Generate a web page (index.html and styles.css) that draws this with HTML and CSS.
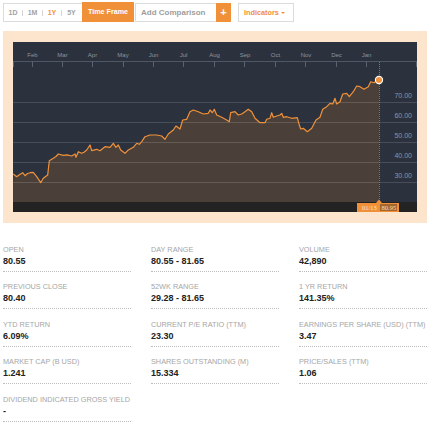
FILE: index.html
```html
<!DOCTYPE html>
<html>
<head>
<meta charset="utf-8">
<link rel="stylesheet" href="styles.css">
</head>
<body>
<div class="toolbar">
  <div class="tabs">
    <span class="tab w18">1D</span><span class="sep"></span>
    <span class="tab w19">1M</span><span class="sep"></span>
    <span class="tab w18 active">1Y</span><span class="sep"></span>
    <span class="tab w19">5Y</span>
  </div>
  <div class="timeframe">Time Frame</div>
  <div class="compare">Add Comparison</div>
  <div class="plus">+</div>
  <div class="indicators">Indicators<span class="caret"></span></div>
</div>

<div class="chart-panel">
  <svg class="chart" width="404" height="170" viewBox="0 0 404 170" xmlns="http://www.w3.org/2000/svg">
    <rect x="0" y="0" width="404" height="170" fill="#2b323e"/>
    <polygon fill="#4a4039" points="0,160 0.3,132 3.7,134.7 6,133 9.7,130.7 12,133.7 14.5,131.5 17,130.7 20.3,130.3 23.7,134.7 27.7,140.7 30.3,136.3 34.7,133 36.3,118.7 40.3,116.3 43,114.5 45.3,112 50.3,113.3 54,112.8 58.7,114 62,112 63,115.3 65.3,109.7 68.7,111.3 71,110.2 73.7,108 77,103 78.7,108.7 83.7,107.3 87,108.7 92,104.7 97,105.3 100.3,101.3 103,105.3 105.3,103 107.7,108 112,111.3 115.3,108 120.3,105.3 123.7,101.3 126.3,102.3 128.7,99.7 132,94.7 137,93 143.7,93 148.7,94 152,97.3 155.3,92 160.3,88 163,84 167,87 169.7,78 173.7,77.3 177,69.7 180.3,68 185.3,69.7 190.3,72 195.3,71.3 197,68 199.3,70.7 201.3,67.3 203.7,73 208.7,75.3 213.7,78 216.3,79.7 217.7,70.7 222,69.7 225.3,73 228.7,72 232,69.7 235.3,67.3 238.7,69.7 242,76.3 247,80.7 252,80.7 253.7,77.3 257,76.3 258.7,70.7 260.3,75.3 263.7,74 267,73 268.7,71.3 270.3,75.3 273.7,74.7 278.7,76.3 284.3,75.7 286.3,83 287.7,87 290.3,86.3 294.3,89.7 298.7,86.3 303,78 307,75.3 309.7,67.3 313.7,64.7 317,61.3 319.7,62 322,56.3 323.7,62 327,59.7 329.7,52 333.7,51.3 336.3,54.7 340.3,49.7 343.7,44 347,44.7 351,47.3 355.3,44.7 357.7,39.7 361,40.7 363.7,38.7 366,38 366,160"/>
    <g stroke="rgba(255,255,255,0.14)" stroke-width="1">
      <line x1="0" y1="60.5" x2="404" y2="60.5"/>
      <line x1="0" y1="80.5" x2="404" y2="80.5"/>
      <line x1="0" y1="100.5" x2="404" y2="100.5"/>
      <line x1="0" y1="120.5" x2="404" y2="120.5"/>
      <line x1="0" y1="140.5" x2="404" y2="140.5"/>
    </g>
    <line x1="0" y1="19.5" x2="404" y2="19.5" stroke="#4f5765" stroke-width="1"/>
    <g stroke="#5a6270" stroke-width="1">
      <line x1="0.5" y1="19" x2="0.5" y2="25"/>
      <line x1="19.5" y1="19" x2="19.5" y2="25"/>
      <line x1="49.5" y1="19" x2="49.5" y2="25"/>
      <line x1="79.5" y1="19" x2="79.5" y2="25"/>
      <line x1="110.5" y1="19" x2="110.5" y2="25"/>
      <line x1="140.5" y1="19" x2="140.5" y2="25"/>
      <line x1="170.5" y1="19" x2="170.5" y2="25"/>
      <line x1="201.5" y1="19" x2="201.5" y2="25"/>
      <line x1="231.5" y1="19" x2="231.5" y2="25"/>
      <line x1="262.5" y1="19" x2="262.5" y2="25"/>
      <line x1="292.5" y1="19" x2="292.5" y2="25"/>
      <line x1="323.5" y1="19" x2="323.5" y2="25"/>
      <line x1="353.5" y1="19" x2="353.5" y2="25"/>
      <line x1="403.5" y1="19" x2="403.5" y2="25"/>
    </g>
    <g class="month" text-anchor="middle">
      <text x="19.5" y="14.5">Feb</text>
      <text x="49.5" y="14.5">Mar</text>
      <text x="79.5" y="14.5">Apr</text>
      <text x="110" y="14.5">May</text>
      <text x="140.5" y="14.5">Jun</text>
      <text x="170.5" y="14.5">Jul</text>
      <text x="201.5" y="14.5">Aug</text>
      <text x="232" y="14.5">Sep</text>
      <text x="262.5" y="14.5">Oct</text>
      <text x="293" y="14.5">Nov</text>
      <text x="323.5" y="14.5">Dec</text>
      <text x="353.5" y="14.5">Jan</text>
    </g>
    <polyline fill="none" stroke="#f0913a" stroke-width="1.2" stroke-linejoin="round" points="0.3,132 3.7,134.7 6,133 9.7,130.7 12,133.7 14.5,131.5 17,130.7 20.3,130.3 23.7,134.7 27.7,140.7 30.3,136.3 34.7,133 36.3,118.7 40.3,116.3 43,114.5 45.3,112 50.3,113.3 54,112.8 58.7,114 62,112 63,115.3 65.3,109.7 68.7,111.3 71,110.2 73.7,108 77,103 78.7,108.7 83.7,107.3 87,108.7 92,104.7 97,105.3 100.3,101.3 103,105.3 105.3,103 107.7,108 112,111.3 115.3,108 120.3,105.3 123.7,101.3 126.3,102.3 128.7,99.7 132,94.7 137,93 143.7,93 148.7,94 152,97.3 155.3,92 160.3,88 163,84 167,87 169.7,78 173.7,77.3 177,69.7 180.3,68 185.3,69.7 190.3,72 195.3,71.3 197,68 199.3,70.7 201.3,67.3 203.7,73 208.7,75.3 213.7,78 216.3,79.7 217.7,70.7 222,69.7 225.3,73 228.7,72 232,69.7 235.3,67.3 238.7,69.7 242,76.3 247,80.7 252,80.7 253.7,77.3 257,76.3 258.7,70.7 260.3,75.3 263.7,74 267,73 268.7,71.3 270.3,75.3 273.7,74.7 278.7,76.3 284.3,75.7 286.3,83 287.7,87 290.3,86.3 294.3,89.7 298.7,86.3 303,78 307,75.3 309.7,67.3 313.7,64.7 317,61.3 319.7,62 322,56.3 323.7,62 327,59.7 329.7,52 333.7,51.3 336.3,54.7 340.3,49.7 343.7,44 347,44.7 351,47.3 355.3,44.7 357.7,39.7 361,40.7 363.7,38.7 366,38"/>
    <line x1="366.5" y1="20" x2="366.5" y2="160" stroke="#a0703e" stroke-width="1" stroke-dasharray="1 1"/>
    <g class="yaxis" text-anchor="end">
      <text x="399" y="56">70.00</text>
      <text x="399" y="76">60.00</text>
      <text x="399" y="96">50.00</text>
      <text x="399" y="116">40.00</text>
      <text x="399" y="136">30.00</text>
    </g>
    <rect x="0" y="160" width="404" height="10" fill="#232323"/>
    <polygon points="363,161 366,157.5 369,161" fill="#f0913a"/>
    <rect x="344" y="161" width="42" height="9" fill="#f0913a"/>
    <rect x="367" y="162" width="17" height="7" fill="#a2672f"/>
    <text class="tagdate" x="349" y="168">01/13</text>
    <text class="tagval" x="368.5" y="168">80.95</text>
    <circle cx="366" cy="38" r="3.6" fill="#f0913a" stroke="#ffffff" stroke-width="1.1"/>
  </svg>
</div>

<div class="stats">
  <div class="stat"><div class="label">OPEN</div><div class="value">80.55</div></div>
  <div class="stat"><div class="label">DAY RANGE</div><div class="value">80.55 - 81.65</div></div>
  <div class="stat"><div class="label">VOLUME</div><div class="value">42,890</div></div>
  <div class="stat"><div class="label">PREVIOUS CLOSE</div><div class="value">80.40</div></div>
  <div class="stat"><div class="label">52WK RANGE</div><div class="value">29.28 - 81.65</div></div>
  <div class="stat"><div class="label">1 YR RETURN</div><div class="value">141.35%</div></div>
  <div class="stat"><div class="label">YTD RETURN</div><div class="value">6.09%</div></div>
  <div class="stat"><div class="label">CURRENT P/E RATIO (TTM)</div><div class="value">23.30</div></div>
  <div class="stat"><div class="label">EARNINGS PER SHARE (USD) (TTM)</div><div class="value">3.47</div></div>
  <div class="stat"><div class="label">MARKET CAP (B USD)</div><div class="value">1.241</div></div>
  <div class="stat"><div class="label">SHARES OUTSTANDING (M)</div><div class="value">15.334</div></div>
  <div class="stat"><div class="label">PRICE/SALES (TTM)</div><div class="value">1.06</div></div>
  <div class="stat"><div class="label">DIVIDEND INDICATED GROSS YIELD</div><div class="value">-</div></div>
</div>
</body>
</html>
```

FILE: styles.css
```css
html, body {
  margin: 0;
  padding: 0;
  background: #ffffff;
}
body {
  padding: 0 3px;
  font-family: "Liberation Sans", Arial, sans-serif;
  width: 446px;
  box-sizing: border-box;
}
.toolbar {
  display: flex;
  align-items: flex-end;
  height: 22px;
  box-sizing: border-box;
  padding-top: 2px;
}
.tabs {
  display: flex;
  align-items: center;
  height: 19px;
  box-sizing: border-box;
  border: 1px solid #dcdcdc;
  border-right: none;
  width: 79px;
}
.tab {
  text-align: center;
  font-size: 7px;
  font-weight: bold;
  color: #a3a3a3;
  line-height: 17px;
}
.tab.w18 { width: 18px; }
.tab.w19 { width: 19px; }
.tab.active { color: #f0913a; }
.sep {
  width: 1px;
  height: 6px;
  background: #d5d5d5;
}
.timeframe {
  width: 52px;
  height: 20px;
  background: #f0913a;
  color: #ffffff;
  font-size: 7.2px;
  font-weight: bold;
  line-height: 19px;
  text-align: center;
}
.compare {
  margin-left: 1px;
  width: 81px;
  height: 19px;
  box-sizing: border-box;
  border: 1px solid #dcdcdc;
  border-right: none;
  padding-left: 5px;
  font-size: 8px;
  font-weight: bold;
  color: #9d9d9d;
  line-height: 17px;
}
.plus {
  width: 15px;
  height: 19px;
  background: #f0913a;
  color: #ffffff;
  font-size: 11px;
  font-weight: bold;
  line-height: 19px;
  text-align: center;
}
.indicators {
  margin-left: 7px;
  width: 56px;
  height: 19px;
  box-sizing: border-box;
  border: 1px solid #dcdcdc;
  padding-left: 5px;
  font-size: 7.3px;
  font-weight: bold;
  color: #f0913a;
  line-height: 16px;
  display: flex;
  align-items: center;
}
.caret {
  margin-left: 2px;
  margin-top: 1px;
  width: 0;
  height: 0;
  border-left: 2px solid transparent;
  border-right: 2px solid transparent;
  border-top: 2px solid #f0913a;
}
.chart-panel {
  margin-top: 9px;
  width: 424px;
  box-sizing: border-box;
  background: #fde4cc;
  padding: 11px 10px 11px 10px;
}
.chart {
  display: block;
}
.month {
  font-family: "Liberation Sans", Arial, sans-serif;
  font-size: 6px;
  fill: #8d949e;
}
.yaxis {
  font-family: "Liberation Sans", Arial, sans-serif;
  font-size: 7px;
  fill: #8d949e;
}
.tagdate {
  font-family: "Liberation Serif", "Times New Roman", serif;
  font-size: 6.5px;
  fill: #fde4cc;
}
.tagval {
  font-family: "Liberation Serif", "Times New Roman", serif;
  font-size: 6.5px;
  fill: #f8dcc0;
}
.stats {
  margin-top: 22px;
  display: grid;
  grid-template-columns: 128px 128px 128px;
  column-gap: 20px;
  row-gap: 10.4px;
}
.stat {
  border-bottom: 1px dotted #bdbdbd;
  padding-bottom: 4px;
}
.label {
  font-size: 7.3px;
  line-height: 9px;
  color: #a6a6a6;
  white-space: nowrap;
}
.value {
  margin-top: 2px;
  font-size: 9px;
  line-height: 11px;
  font-weight: bold;
  color: #222222;
}
```
